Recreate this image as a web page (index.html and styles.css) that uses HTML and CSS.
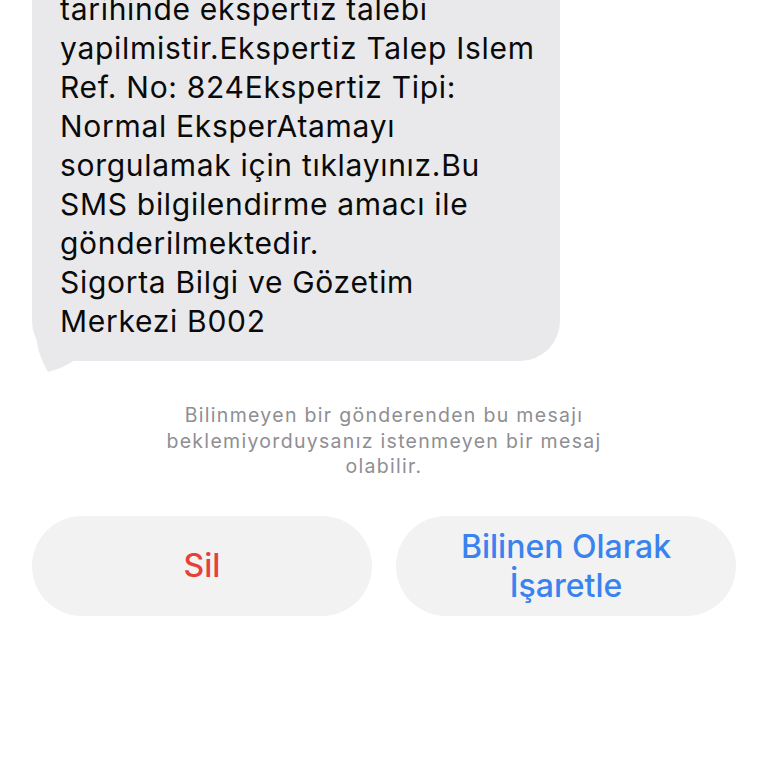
FILE: index.html
```html
<!DOCTYPE html>
<html lang="tr">
<head>
<meta charset="utf-8">
<link rel="stylesheet" href="styles.css">
</head>
<body>
<div class="page">
  <div class="bubble-wrap">
    <div class="bubble">tarihinde ekspertiz talebi<br>yapilmistir.Ekspertiz Talep Islem<br>Ref. No: 824Ekspertiz Tipi:<br>Normal EksperAtamayı<br>sorgulamak için tıklayınız.Bu<br>SMS bilgilendirme amacı ile<br>gönderilmektedir.<br>Sigorta Bilgi ve Gözetim<br>Merkezi B002</div>
    <svg class="tail" width="44" height="40" viewBox="0 0 44 40"><path d="M2 0 C3 14 8 27 14 37 C25 34 34 30 42 24 L42 0 Z" fill="#e9e9eb"/></svg>
  </div>
  <p class="notice">Bilinmeyen bir gönderenden bu mesajı<br>beklemiyorduysanız istenmeyen bir mesaj<br>olabilir.</p>
  <div class="actions">
    <div class="btn btn-red">Sil</div>
    <div class="btn btn-blue">Bilinen Olarak<br>İşaretle</div>
  </div>
</div>
</body>
</html>
```
FILE: styles.css
```css
html, body {
  margin: 0;
  padding: 0;
  background: #ffffff;
  font-family: Inter, "Liberation Sans", sans-serif;
}
.page {
  width: 768px;
  height: 768px;
  overflow: hidden;
  display: flex;
  flex-direction: column;
}
.bubble-wrap {
  position: relative;
  margin: -40px 0 0 32px;
  width: 528px;
}
.bubble {
  position: relative;
  z-index: 1;
  background: #e9e9eb;
  border-radius: 0 0 40px 40px;
  padding: 30px 20px 20px 28px;
  font-size: 30px;
  line-height: 39px;
  color: #0a0a0a;
  letter-spacing: 0.7px;
}
.tail {
  position: absolute;
  left: 2px;
  bottom: -14px;
  z-index: 0;
}
.notice {
  margin: 42px 0 0 0;
  text-align: center;
  font-size: 19.5px;
  line-height: 25.5px;
  letter-spacing: 1.3px;
  color: #8e8e93;
}
.actions {
  display: flex;
  gap: 24px;
  padding: 0 32px;
  margin-top: 36px;
}
.btn {
  flex: 1;
  height: 100px;
  border-radius: 50px;
  background: #f2f2f2;
  display: flex;
  align-items: center;
  justify-content: center;
  text-align: center;
  font-size: 32px;
  line-height: 39px;
  font-weight: 500;
}
.btn-red { color: #e5413b; }
.btn-blue { color: #3a83ef; }
```
